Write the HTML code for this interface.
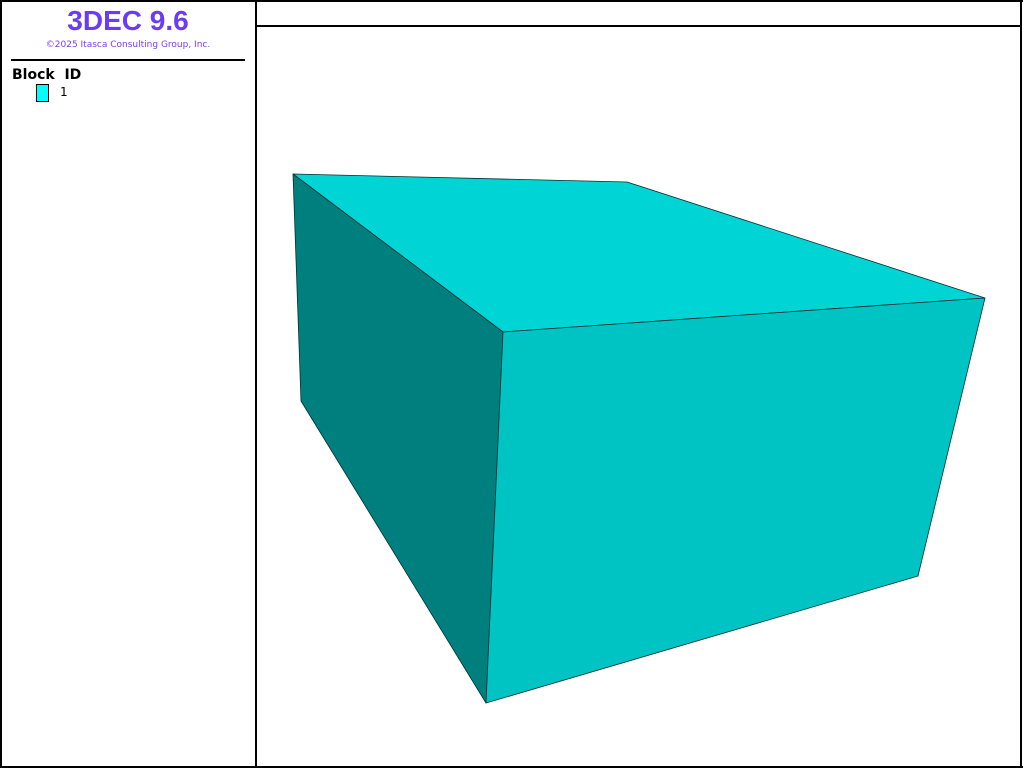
<!DOCTYPE html>
<html><head><style>
body{margin:0;width:1024px;height:768px;background:#fff;position:relative;overflow:hidden;font-family:"DejaVu Sans","Liberation Sans",sans-serif}
.b{position:absolute;background:#000}
</style></head><body>
<div class="b" style="left:0;top:0;width:1023px;height:2px"></div>
<div class="b" style="left:0;top:766px;width:1023px;height:2px"></div>
<div class="b" style="left:0;top:0;width:2px;height:768px"></div>
<div class="b" style="left:1020px;top:0;width:2px;height:768px"></div>
<div class="b" style="left:255px;top:0;width:2px;height:768px"></div>
<div class="b" style="left:256px;top:25px;width:766px;height:2px"></div>
<div class="b" style="left:11px;top:59px;width:234px;height:2px"></div>
<div style="position:absolute;left:0;width:256px;top:4px;text-align:center;color:#6a3cf5;font-weight:bold;font-size:28px;line-height:34px;font-family:'Liberation Sans',sans-serif">3DEC 9.6</div>
<div style="position:absolute;left:0;width:256px;top:40px;text-align:center;color:#7a3cf5;font-size:9px">©2025 Itasca Consulting Group, Inc.</div>
<div style="position:absolute;left:12px;top:67px;font-weight:bold;font-size:14px;color:#000">Block&nbsp; ID</div>
<div style="position:absolute;left:36px;top:84px;width:11px;height:16px;background:#0ff;border:1px solid #000"></div>
<div style="position:absolute;left:60px;top:85px;font-size:12px">1</div>
<svg style="position:absolute;left:0;top:0" width="1024" height="768">
<g stroke="#003030" stroke-width="0.8" stroke-linejoin="round">
<polygon points="293,174 627,182 985,298 503,332" fill="#00d4d4"/>
<polygon points="293,174 503,332 486,703 301,401" fill="#007f7f"/>
<polygon points="503,332 985,298 918,576 486,703" fill="#00c4c4"/>
</g></svg>
</body></html>
